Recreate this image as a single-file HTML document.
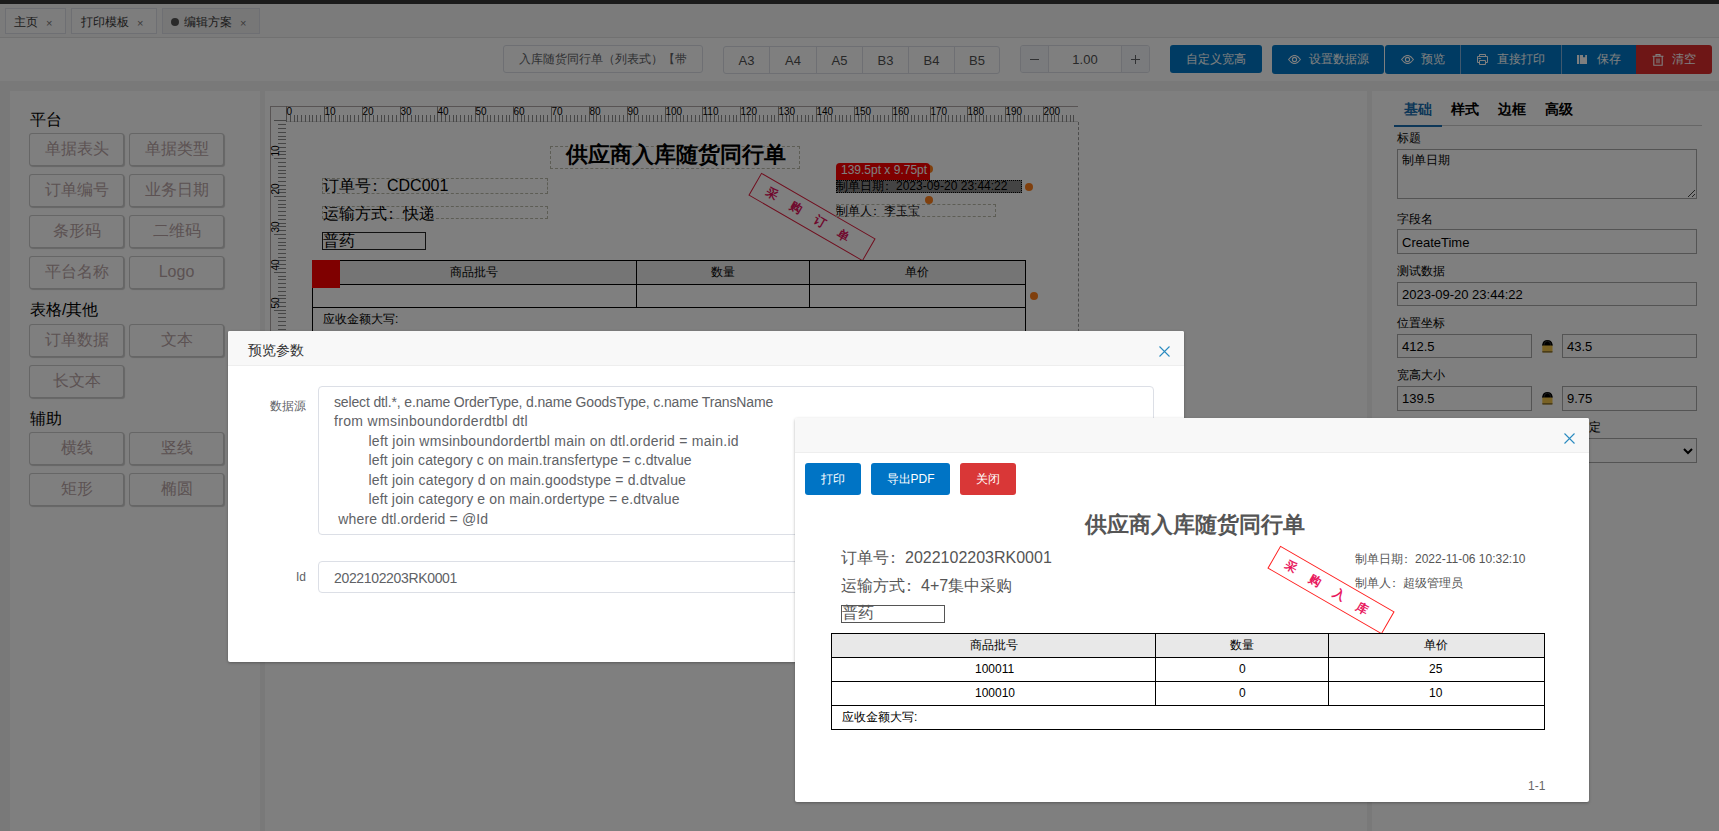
<!DOCTYPE html>
<html><head><meta charset="utf-8">
<style>
*{box-sizing:border-box;margin:0;padding:0}
html,body{width:1719px;height:831px;overflow:hidden;background:#f3f3f3;font-family:"Liberation Sans",sans-serif;color:#333;position:relative}
.a{position:absolute}
.t{position:absolute;white-space:nowrap;line-height:1}
#topbar{left:0;top:0;width:1719px;height:4px;background:#373737}
#tabbar{left:0;top:4px;width:1719px;height:34px;background:#f7f7f7;border-bottom:1px solid #e2e2e2}
.tab{position:absolute;top:4px;height:26px;border:1px solid #dcdfe6;background:#fafafa}
.tab.act{background:#efefef}
.tab .tx{position:absolute;top:7px;font-size:12px;line-height:12px;color:#383838}
.tab .cl{position:absolute;top:8.5px;font-size:11px;line-height:11px;color:#777}
#toolbar{left:0;top:38px;width:1719px;height:43px;background:#fff}
.grp{position:absolute;border:1px solid #dcdfe6;border-radius:3px;background:#fff}
.pbtn{position:absolute;top:0;height:100%;border-left:1px solid #dcdfe6;text-align:center;font-size:13px;color:#505050}
.bbtn{position:absolute;background:#0077c6;color:#fff;font-size:12px;text-align:center}
.panel{position:absolute;background:#fff}
.lbtn{position:absolute;width:95px;height:33px;border:1px solid rgba(0,0,0,0.2);border-radius:3px;box-shadow:1px 1px 1px rgba(0,0,0,0.2);background:#fff;color:#b9a5a6;font-size:16px;text-align:center;line-height:30px}
.lh{position:absolute;font-size:16px;line-height:16px;color:#000}
.dash{position:absolute;border:1px dashed #bba}
.ptxt{position:absolute;white-space:nowrap;color:#000}
.cc{position:relative;left:-0.22em}
#overlay{left:0;top:0;width:1719px;height:831px;background:rgba(0,0,0,0.5)}
.modal{position:absolute;background:#fff;border-radius:2px;box-shadow:0 1px 3px rgba(0,0,0,0.3)}
.mhead{position:absolute;left:0;top:0;width:100%;background:#f8f8f8;border-bottom:1px solid #eee;border-radius:2px 2px 0 0}
.rlabel{position:absolute;font-size:12px;line-height:12px;color:#000}
.rinput{position:absolute;border:1px solid #a9a9a9;background:#fff;font-size:13px;color:#000}
</style></head><body>
<div id="topbar" class="a"></div>
<div id="tabbar" class="a">
  <div class="tab" style="left:5px;width:61px"><span class="tx" style="left:8px">主页</span><span class="cl" style="left:40px">×</span></div>
  <div class="tab" style="left:71px;width:86px"><span class="tx" style="left:9px">打印模板</span><span class="cl" style="left:65px">×</span></div>
  <div class="tab act" style="left:162px;width:98px"><span class="a" style="left:8px;top:8.5px;width:8px;height:8px;border-radius:50%;background:#555"></span><span class="tx" style="left:21px">编辑方案</span><span class="cl" style="left:77px">×</span></div>
</div>
<div id="toolbar" class="a">
  <div class="grp" style="left:503px;top:7px;width:200px;height:28px"><span class="t" style="left:15px;top:7px;font-size:12px;color:#606266">入库随货同行单（列表式）【带</span></div>
  <div class="grp" style="left:723px;top:8px;width:277px;height:28px">
    <span class="pbtn" style="left:0;width:45px;border-left:none;line-height:27px">A3</span>
    <span class="pbtn" style="left:45px;width:47px;line-height:27px">A4</span>
    <span class="pbtn" style="left:92px;width:46px;line-height:27px">A5</span>
    <span class="pbtn" style="left:138px;width:46px;line-height:27px">B3</span>
    <span class="pbtn" style="left:184px;width:46px;line-height:27px">B4</span>
    <span class="pbtn" style="left:230px;width:45px;line-height:27px">B5</span>
  </div>
  <div class="grp" style="left:1020px;top:7px;width:130px;height:28px;overflow:hidden">
    <span class="pbtn" style="left:0;width:27px;border-left:none;background:#f5f7fa"><svg class="a" style="left:9px;top:13px" width="9" height="1"><rect width="9" height="1" fill="#606266"/></svg></span>
    <span class="pbtn" style="left:27px;width:73px;line-height:28px">1.00</span>
    <span class="pbtn" style="left:100px;width:28px;background:#f5f7fa"><svg class="a" style="left:9px;top:9px" width="9" height="9"><rect y="4" width="9" height="1" fill="#606266"/><rect x="4" width="1" height="9" fill="#606266"/></svg></span>
  </div>
  <div class="bbtn" style="left:1170px;top:7px;width:92px;height:28px;border-radius:3px;line-height:28px">自定义宽高</div>
<div class="bbtn" style="left:1272px;top:7px;width:112px;height:29px;border-radius:3px">
  <svg class="a" style="left:16px;top:10px" width="13" height="9" viewBox="0 0 13 9"><path d="M0.6 4.5 Q6.5 -3.6 12.4 4.5 Q6.5 12.6 0.6 4.5 Z" fill="none" stroke="#fff" stroke-width="1.1"/><circle cx="6.5" cy="4.5" r="2.1" fill="none" stroke="#fff" stroke-width="1.1"/></svg>
  <span class="t" style="left:37px;top:8px;font-size:12px">设置数据源</span>
</div>
<div class="bbtn" style="left:1385px;top:7px;width:75px;height:29px;border-radius:3px 0 0 3px">
  <svg class="a" style="left:16px;top:10px" width="13" height="9" viewBox="0 0 13 9"><path d="M0.6 4.5 Q6.5 -3.6 12.4 4.5 Q6.5 12.6 0.6 4.5 Z" fill="none" stroke="#fff" stroke-width="1.1"/><circle cx="6.5" cy="4.5" r="2.1" fill="none" stroke="#fff" stroke-width="1.1"/></svg>
  <span class="t" style="left:36px;top:8px;font-size:12px">预览</span>
</div>
<div class="bbtn" style="left:1460px;top:7px;width:101px;height:29px;border-left:1px solid #7fb0dc">
  <svg class="a" style="left:16px;top:9px" width="11" height="11" viewBox="0 0 11 11"><path d="M2.5 2.5 V0.5 H8.5 V2.5 M2.5 8.5 H0.5 V2.5 H10.5 V8.5 H8.5 M2.5 6.5 H8.5 V10.5 H2.5 Z M1.5 4.5 H3.8" fill="none" stroke="#fff" stroke-width="1"/></svg>
  <span class="t" style="left:36px;top:8px;font-size:12px">直接打印</span>
</div>
<div class="bbtn" style="left:1561px;top:7px;width:75px;height:29px;border-left:1px solid #7fb0dc">
  <svg class="a" style="left:15px;top:10px" width="10" height="9" viewBox="0 0 10 9"><path d="M0 0 H2 V9 H0 Z M2.8 0 H6 V2.3 H8.2 V0 H10 V9 H2.8 Z" fill="#fff"/></svg>
  <span class="t" style="left:35px;top:8px;font-size:12px">保存</span>
</div>
<div class="bbtn" style="left:1636px;top:7px;width:76px;height:29px;border-radius:0 3px 3px 0;background:#dc2c2c">
  <svg class="a" style="left:16px;top:9px" width="12" height="12" viewBox="0 0 12 12"><path d="M4 2.2 V0.6 H8 V2.2 M0.5 2.3 H11.5 M1.8 2.3 V11.3 H10.2 V2.3 M5 4.5 V9.2 M7 4.5 V9.2" fill="none" stroke="#fff" stroke-width="1.1"/></svg>
  <span class="t" style="left:36px;top:8px;font-size:12px">清空</span>
</div>

</div>
<div class="panel" style="left:10px;top:91px;width:250px;height:740px">
  <span class="lh" style="left:20px;top:21px">平台</span>
<div class="lbtn" style="left:19px;top:42px">单据表头</div>
<div class="lbtn" style="left:119px;top:42px">单据类型</div>
<div class="lbtn" style="left:19px;top:83px">订单编号</div>
<div class="lbtn" style="left:119px;top:83px">业务日期</div>
<div class="lbtn" style="left:19px;top:124px">条形码</div>
<div class="lbtn" style="left:119px;top:124px">二维码</div>
<div class="lbtn" style="left:19px;top:165px">平台名称</div>
<div class="lbtn" style="left:119px;top:165px">Logo</div>
<span class="lh" style="left:20px;top:211px">表格/其他</span>
<div class="lbtn" style="left:19px;top:233px">订单数据</div>
<div class="lbtn" style="left:119px;top:233px">文本</div>
<div class="lbtn" style="left:19px;top:274px">长文本</div>
<span class="lh" style="left:20px;top:320px">辅助</span>
<div class="lbtn" style="left:19px;top:341px">横线</div>
<div class="lbtn" style="left:119px;top:341px">竖线</div>
<div class="lbtn" style="left:19px;top:382px">矩形</div>
<div class="lbtn" style="left:119px;top:382px">椭圆</div>

</div>
<div class="panel" style="left:265px;top:91px;width:1102px;height:740px;overflow:hidden">
  <div class="a" style="left:5px;top:15px;width:809px;height:240px"><svg width="808" height="240" style="position:absolute;left:0;top:0" shape-rendering="crispEdges"><rect x="0" y="0" width="808" height="1" fill="#b0a8a8"/><rect x="0" y="0" width="1" height="240" fill="#b0a8a8"/><rect x="16" y="15" width="792" height="1" fill="#d8d8d8"/><rect x="16" y="0" width="1" height="16" fill="#909090"/><text x="16.5" y="9" font-size="10" fill="#000" font-family="Liberation Sans, sans-serif" shape-rendering="auto">0</text><rect x="20" y="9" width="1" height="7" fill="#8c8c8c"/><rect x="24" y="9" width="1" height="7" fill="#8c8c8c"/><rect x="27" y="9" width="1" height="7" fill="#8c8c8c"/><rect x="31" y="9" width="1" height="7" fill="#8c8c8c"/><rect x="35" y="9" width="1" height="7" fill="#8c8c8c"/><rect x="39" y="9" width="1" height="7" fill="#8c8c8c"/><rect x="42" y="9" width="1" height="7" fill="#8c8c8c"/><rect x="46" y="9" width="1" height="7" fill="#8c8c8c"/><rect x="50" y="9" width="1" height="7" fill="#8c8c8c"/><rect x="54" y="0" width="1" height="16" fill="#909090"/><text x="54.5" y="9" font-size="10" fill="#000" font-family="Liberation Sans, sans-serif" shape-rendering="auto">10</text><rect x="58" y="9" width="1" height="7" fill="#8c8c8c"/><rect x="61" y="9" width="1" height="7" fill="#8c8c8c"/><rect x="65" y="9" width="1" height="7" fill="#8c8c8c"/><rect x="69" y="9" width="1" height="7" fill="#8c8c8c"/><rect x="73" y="9" width="1" height="7" fill="#8c8c8c"/><rect x="77" y="9" width="1" height="7" fill="#8c8c8c"/><rect x="80" y="9" width="1" height="7" fill="#8c8c8c"/><rect x="84" y="9" width="1" height="7" fill="#8c8c8c"/><rect x="88" y="9" width="1" height="7" fill="#8c8c8c"/><rect x="92" y="0" width="1" height="16" fill="#909090"/><text x="92.5" y="9" font-size="10" fill="#000" font-family="Liberation Sans, sans-serif" shape-rendering="auto">20</text><rect x="95" y="9" width="1" height="7" fill="#8c8c8c"/><rect x="99" y="9" width="1" height="7" fill="#8c8c8c"/><rect x="103" y="9" width="1" height="7" fill="#8c8c8c"/><rect x="107" y="9" width="1" height="7" fill="#8c8c8c"/><rect x="111" y="9" width="1" height="7" fill="#8c8c8c"/><rect x="114" y="9" width="1" height="7" fill="#8c8c8c"/><rect x="118" y="9" width="1" height="7" fill="#8c8c8c"/><rect x="122" y="9" width="1" height="7" fill="#8c8c8c"/><rect x="126" y="9" width="1" height="7" fill="#8c8c8c"/><rect x="130" y="0" width="1" height="16" fill="#909090"/><text x="130.5" y="9" font-size="10" fill="#000" font-family="Liberation Sans, sans-serif" shape-rendering="auto">30</text><rect x="133" y="9" width="1" height="7" fill="#8c8c8c"/><rect x="137" y="9" width="1" height="7" fill="#8c8c8c"/><rect x="141" y="9" width="1" height="7" fill="#8c8c8c"/><rect x="145" y="9" width="1" height="7" fill="#8c8c8c"/><rect x="148" y="9" width="1" height="7" fill="#8c8c8c"/><rect x="152" y="9" width="1" height="7" fill="#8c8c8c"/><rect x="156" y="9" width="1" height="7" fill="#8c8c8c"/><rect x="160" y="9" width="1" height="7" fill="#8c8c8c"/><rect x="164" y="9" width="1" height="7" fill="#8c8c8c"/><rect x="167" y="0" width="1" height="16" fill="#909090"/><text x="167.5" y="9" font-size="10" fill="#000" font-family="Liberation Sans, sans-serif" shape-rendering="auto">40</text><rect x="171" y="9" width="1" height="7" fill="#8c8c8c"/><rect x="175" y="9" width="1" height="7" fill="#8c8c8c"/><rect x="179" y="9" width="1" height="7" fill="#8c8c8c"/><rect x="183" y="9" width="1" height="7" fill="#8c8c8c"/><rect x="186" y="9" width="1" height="7" fill="#8c8c8c"/><rect x="190" y="9" width="1" height="7" fill="#8c8c8c"/><rect x="194" y="9" width="1" height="7" fill="#8c8c8c"/><rect x="198" y="9" width="1" height="7" fill="#8c8c8c"/><rect x="201" y="9" width="1" height="7" fill="#8c8c8c"/><rect x="205" y="0" width="1" height="16" fill="#909090"/><text x="205.5" y="9" font-size="10" fill="#000" font-family="Liberation Sans, sans-serif" shape-rendering="auto">50</text><rect x="209" y="9" width="1" height="7" fill="#8c8c8c"/><rect x="213" y="9" width="1" height="7" fill="#8c8c8c"/><rect x="217" y="9" width="1" height="7" fill="#8c8c8c"/><rect x="220" y="9" width="1" height="7" fill="#8c8c8c"/><rect x="224" y="9" width="1" height="7" fill="#8c8c8c"/><rect x="228" y="9" width="1" height="7" fill="#8c8c8c"/><rect x="232" y="9" width="1" height="7" fill="#8c8c8c"/><rect x="236" y="9" width="1" height="7" fill="#8c8c8c"/><rect x="239" y="9" width="1" height="7" fill="#8c8c8c"/><rect x="243" y="0" width="1" height="16" fill="#909090"/><text x="243.5" y="9" font-size="10" fill="#000" font-family="Liberation Sans, sans-serif" shape-rendering="auto">60</text><rect x="247" y="9" width="1" height="7" fill="#8c8c8c"/><rect x="251" y="9" width="1" height="7" fill="#8c8c8c"/><rect x="254" y="9" width="1" height="7" fill="#8c8c8c"/><rect x="258" y="9" width="1" height="7" fill="#8c8c8c"/><rect x="262" y="9" width="1" height="7" fill="#8c8c8c"/><rect x="266" y="9" width="1" height="7" fill="#8c8c8c"/><rect x="270" y="9" width="1" height="7" fill="#8c8c8c"/><rect x="273" y="9" width="1" height="7" fill="#8c8c8c"/><rect x="277" y="9" width="1" height="7" fill="#8c8c8c"/><rect x="281" y="0" width="1" height="16" fill="#909090"/><text x="281.5" y="9" font-size="10" fill="#000" font-family="Liberation Sans, sans-serif" shape-rendering="auto">70</text><rect x="285" y="9" width="1" height="7" fill="#8c8c8c"/><rect x="289" y="9" width="1" height="7" fill="#8c8c8c"/><rect x="292" y="9" width="1" height="7" fill="#8c8c8c"/><rect x="296" y="9" width="1" height="7" fill="#8c8c8c"/><rect x="300" y="9" width="1" height="7" fill="#8c8c8c"/><rect x="304" y="9" width="1" height="7" fill="#8c8c8c"/><rect x="307" y="9" width="1" height="7" fill="#8c8c8c"/><rect x="311" y="9" width="1" height="7" fill="#8c8c8c"/><rect x="315" y="9" width="1" height="7" fill="#8c8c8c"/><rect x="319" y="0" width="1" height="16" fill="#909090"/><text x="319.5" y="9" font-size="10" fill="#000" font-family="Liberation Sans, sans-serif" shape-rendering="auto">80</text><rect x="323" y="9" width="1" height="7" fill="#8c8c8c"/><rect x="326" y="9" width="1" height="7" fill="#8c8c8c"/><rect x="330" y="9" width="1" height="7" fill="#8c8c8c"/><rect x="334" y="9" width="1" height="7" fill="#8c8c8c"/><rect x="338" y="9" width="1" height="7" fill="#8c8c8c"/><rect x="342" y="9" width="1" height="7" fill="#8c8c8c"/><rect x="345" y="9" width="1" height="7" fill="#8c8c8c"/><rect x="349" y="9" width="1" height="7" fill="#8c8c8c"/><rect x="353" y="9" width="1" height="7" fill="#8c8c8c"/><rect x="357" y="0" width="1" height="16" fill="#909090"/><text x="357.5" y="9" font-size="10" fill="#000" font-family="Liberation Sans, sans-serif" shape-rendering="auto">90</text><rect x="360" y="9" width="1" height="7" fill="#8c8c8c"/><rect x="364" y="9" width="1" height="7" fill="#8c8c8c"/><rect x="368" y="9" width="1" height="7" fill="#8c8c8c"/><rect x="372" y="9" width="1" height="7" fill="#8c8c8c"/><rect x="376" y="9" width="1" height="7" fill="#8c8c8c"/><rect x="379" y="9" width="1" height="7" fill="#8c8c8c"/><rect x="383" y="9" width="1" height="7" fill="#8c8c8c"/><rect x="387" y="9" width="1" height="7" fill="#8c8c8c"/><rect x="391" y="9" width="1" height="7" fill="#8c8c8c"/><rect x="395" y="0" width="1" height="16" fill="#909090"/><text x="395.5" y="9" font-size="10" fill="#000" font-family="Liberation Sans, sans-serif" shape-rendering="auto">100</text><rect x="398" y="9" width="1" height="7" fill="#8c8c8c"/><rect x="402" y="9" width="1" height="7" fill="#8c8c8c"/><rect x="406" y="9" width="1" height="7" fill="#8c8c8c"/><rect x="410" y="9" width="1" height="7" fill="#8c8c8c"/><rect x="413" y="9" width="1" height="7" fill="#8c8c8c"/><rect x="417" y="9" width="1" height="7" fill="#8c8c8c"/><rect x="421" y="9" width="1" height="7" fill="#8c8c8c"/><rect x="425" y="9" width="1" height="7" fill="#8c8c8c"/><rect x="429" y="9" width="1" height="7" fill="#8c8c8c"/><rect x="432" y="0" width="1" height="16" fill="#909090"/><text x="432.5" y="9" font-size="10" fill="#000" font-family="Liberation Sans, sans-serif" shape-rendering="auto">110</text><rect x="436" y="9" width="1" height="7" fill="#8c8c8c"/><rect x="440" y="9" width="1" height="7" fill="#8c8c8c"/><rect x="444" y="9" width="1" height="7" fill="#8c8c8c"/><rect x="448" y="9" width="1" height="7" fill="#8c8c8c"/><rect x="451" y="9" width="1" height="7" fill="#8c8c8c"/><rect x="455" y="9" width="1" height="7" fill="#8c8c8c"/><rect x="459" y="9" width="1" height="7" fill="#8c8c8c"/><rect x="463" y="9" width="1" height="7" fill="#8c8c8c"/><rect x="466" y="9" width="1" height="7" fill="#8c8c8c"/><rect x="470" y="0" width="1" height="16" fill="#909090"/><text x="470.5" y="9" font-size="10" fill="#000" font-family="Liberation Sans, sans-serif" shape-rendering="auto">120</text><rect x="474" y="9" width="1" height="7" fill="#8c8c8c"/><rect x="478" y="9" width="1" height="7" fill="#8c8c8c"/><rect x="482" y="9" width="1" height="7" fill="#8c8c8c"/><rect x="485" y="9" width="1" height="7" fill="#8c8c8c"/><rect x="489" y="9" width="1" height="7" fill="#8c8c8c"/><rect x="493" y="9" width="1" height="7" fill="#8c8c8c"/><rect x="497" y="9" width="1" height="7" fill="#8c8c8c"/><rect x="501" y="9" width="1" height="7" fill="#8c8c8c"/><rect x="504" y="9" width="1" height="7" fill="#8c8c8c"/><rect x="508" y="0" width="1" height="16" fill="#909090"/><text x="508.5" y="9" font-size="10" fill="#000" font-family="Liberation Sans, sans-serif" shape-rendering="auto">130</text><rect x="512" y="9" width="1" height="7" fill="#8c8c8c"/><rect x="516" y="9" width="1" height="7" fill="#8c8c8c"/><rect x="519" y="9" width="1" height="7" fill="#8c8c8c"/><rect x="523" y="9" width="1" height="7" fill="#8c8c8c"/><rect x="527" y="9" width="1" height="7" fill="#8c8c8c"/><rect x="531" y="9" width="1" height="7" fill="#8c8c8c"/><rect x="535" y="9" width="1" height="7" fill="#8c8c8c"/><rect x="538" y="9" width="1" height="7" fill="#8c8c8c"/><rect x="542" y="9" width="1" height="7" fill="#8c8c8c"/><rect x="546" y="0" width="1" height="16" fill="#909090"/><text x="546.5" y="9" font-size="10" fill="#000" font-family="Liberation Sans, sans-serif" shape-rendering="auto">140</text><rect x="550" y="9" width="1" height="7" fill="#8c8c8c"/><rect x="554" y="9" width="1" height="7" fill="#8c8c8c"/><rect x="557" y="9" width="1" height="7" fill="#8c8c8c"/><rect x="561" y="9" width="1" height="7" fill="#8c8c8c"/><rect x="565" y="9" width="1" height="7" fill="#8c8c8c"/><rect x="569" y="9" width="1" height="7" fill="#8c8c8c"/><rect x="572" y="9" width="1" height="7" fill="#8c8c8c"/><rect x="576" y="9" width="1" height="7" fill="#8c8c8c"/><rect x="580" y="9" width="1" height="7" fill="#8c8c8c"/><rect x="584" y="0" width="1" height="16" fill="#909090"/><text x="584.5" y="9" font-size="10" fill="#000" font-family="Liberation Sans, sans-serif" shape-rendering="auto">150</text><rect x="588" y="9" width="1" height="7" fill="#8c8c8c"/><rect x="591" y="9" width="1" height="7" fill="#8c8c8c"/><rect x="595" y="9" width="1" height="7" fill="#8c8c8c"/><rect x="599" y="9" width="1" height="7" fill="#8c8c8c"/><rect x="603" y="9" width="1" height="7" fill="#8c8c8c"/><rect x="607" y="9" width="1" height="7" fill="#8c8c8c"/><rect x="610" y="9" width="1" height="7" fill="#8c8c8c"/><rect x="614" y="9" width="1" height="7" fill="#8c8c8c"/><rect x="618" y="9" width="1" height="7" fill="#8c8c8c"/><rect x="622" y="0" width="1" height="16" fill="#909090"/><text x="622.5" y="9" font-size="10" fill="#000" font-family="Liberation Sans, sans-serif" shape-rendering="auto">160</text><rect x="625" y="9" width="1" height="7" fill="#8c8c8c"/><rect x="629" y="9" width="1" height="7" fill="#8c8c8c"/><rect x="633" y="9" width="1" height="7" fill="#8c8c8c"/><rect x="637" y="9" width="1" height="7" fill="#8c8c8c"/><rect x="641" y="9" width="1" height="7" fill="#8c8c8c"/><rect x="644" y="9" width="1" height="7" fill="#8c8c8c"/><rect x="648" y="9" width="1" height="7" fill="#8c8c8c"/><rect x="652" y="9" width="1" height="7" fill="#8c8c8c"/><rect x="656" y="9" width="1" height="7" fill="#8c8c8c"/><rect x="660" y="0" width="1" height="16" fill="#909090"/><text x="660.5" y="9" font-size="10" fill="#000" font-family="Liberation Sans, sans-serif" shape-rendering="auto">170</text><rect x="663" y="9" width="1" height="7" fill="#8c8c8c"/><rect x="667" y="9" width="1" height="7" fill="#8c8c8c"/><rect x="671" y="9" width="1" height="7" fill="#8c8c8c"/><rect x="675" y="9" width="1" height="7" fill="#8c8c8c"/><rect x="678" y="9" width="1" height="7" fill="#8c8c8c"/><rect x="682" y="9" width="1" height="7" fill="#8c8c8c"/><rect x="686" y="9" width="1" height="7" fill="#8c8c8c"/><rect x="690" y="9" width="1" height="7" fill="#8c8c8c"/><rect x="694" y="9" width="1" height="7" fill="#8c8c8c"/><rect x="697" y="0" width="1" height="16" fill="#909090"/><text x="697.5" y="9" font-size="10" fill="#000" font-family="Liberation Sans, sans-serif" shape-rendering="auto">180</text><rect x="701" y="9" width="1" height="7" fill="#8c8c8c"/><rect x="705" y="9" width="1" height="7" fill="#8c8c8c"/><rect x="709" y="9" width="1" height="7" fill="#8c8c8c"/><rect x="713" y="9" width="1" height="7" fill="#8c8c8c"/><rect x="716" y="9" width="1" height="7" fill="#8c8c8c"/><rect x="720" y="9" width="1" height="7" fill="#8c8c8c"/><rect x="724" y="9" width="1" height="7" fill="#8c8c8c"/><rect x="728" y="9" width="1" height="7" fill="#8c8c8c"/><rect x="731" y="9" width="1" height="7" fill="#8c8c8c"/><rect x="735" y="0" width="1" height="16" fill="#909090"/><text x="735.5" y="9" font-size="10" fill="#000" font-family="Liberation Sans, sans-serif" shape-rendering="auto">190</text><rect x="739" y="9" width="1" height="7" fill="#8c8c8c"/><rect x="743" y="9" width="1" height="7" fill="#8c8c8c"/><rect x="747" y="9" width="1" height="7" fill="#8c8c8c"/><rect x="750" y="9" width="1" height="7" fill="#8c8c8c"/><rect x="754" y="9" width="1" height="7" fill="#8c8c8c"/><rect x="758" y="9" width="1" height="7" fill="#8c8c8c"/><rect x="762" y="9" width="1" height="7" fill="#8c8c8c"/><rect x="766" y="9" width="1" height="7" fill="#8c8c8c"/><rect x="769" y="9" width="1" height="7" fill="#8c8c8c"/><rect x="773" y="0" width="1" height="16" fill="#909090"/><text x="773.5" y="9" font-size="10" fill="#000" font-family="Liberation Sans, sans-serif" shape-rendering="auto">200</text><rect x="777" y="9" width="1" height="7" fill="#8c8c8c"/><rect x="781" y="9" width="1" height="7" fill="#8c8c8c"/><rect x="784" y="9" width="1" height="7" fill="#8c8c8c"/><rect x="788" y="9" width="1" height="7" fill="#8c8c8c"/><rect x="792" y="9" width="1" height="7" fill="#8c8c8c"/><rect x="796" y="9" width="1" height="7" fill="#8c8c8c"/><rect x="800" y="9" width="1" height="7" fill="#8c8c8c"/><rect x="803" y="9" width="1" height="7" fill="#8c8c8c"/><rect x="4" y="14" width="12" height="1" fill="#8c8c8c"/><rect x="8" y="18" width="8" height="1" fill="#8c8c8c"/><rect x="8" y="22" width="8" height="1" fill="#8c8c8c"/><rect x="8" y="26" width="8" height="1" fill="#8c8c8c"/><rect x="8" y="30" width="8" height="1" fill="#8c8c8c"/><rect x="8" y="33" width="8" height="1" fill="#8c8c8c"/><rect x="8" y="37" width="8" height="1" fill="#8c8c8c"/><rect x="8" y="41" width="8" height="1" fill="#8c8c8c"/><rect x="8" y="45" width="8" height="1" fill="#8c8c8c"/><rect x="8" y="48" width="8" height="1" fill="#8c8c8c"/><rect x="4" y="52" width="12" height="1" fill="#8c8c8c"/><text transform="translate(8.8,50.5) rotate(-90)" font-size="10" fill="#000" font-family="Liberation Sans, sans-serif">10</text><rect x="8" y="56" width="8" height="1" fill="#8c8c8c"/><rect x="8" y="60" width="8" height="1" fill="#8c8c8c"/><rect x="8" y="64" width="8" height="1" fill="#8c8c8c"/><rect x="8" y="67" width="8" height="1" fill="#8c8c8c"/><rect x="8" y="71" width="8" height="1" fill="#8c8c8c"/><rect x="8" y="75" width="8" height="1" fill="#8c8c8c"/><rect x="8" y="79" width="8" height="1" fill="#8c8c8c"/><rect x="8" y="83" width="8" height="1" fill="#8c8c8c"/><rect x="8" y="86" width="8" height="1" fill="#8c8c8c"/><rect x="4" y="90" width="12" height="1" fill="#8c8c8c"/><text transform="translate(8.8,88.5) rotate(-90)" font-size="10" fill="#000" font-family="Liberation Sans, sans-serif">20</text><rect x="8" y="94" width="8" height="1" fill="#8c8c8c"/><rect x="8" y="98" width="8" height="1" fill="#8c8c8c"/><rect x="8" y="101" width="8" height="1" fill="#8c8c8c"/><rect x="8" y="105" width="8" height="1" fill="#8c8c8c"/><rect x="8" y="109" width="8" height="1" fill="#8c8c8c"/><rect x="8" y="113" width="8" height="1" fill="#8c8c8c"/><rect x="8" y="117" width="8" height="1" fill="#8c8c8c"/><rect x="8" y="120" width="8" height="1" fill="#8c8c8c"/><rect x="8" y="124" width="8" height="1" fill="#8c8c8c"/><rect x="4" y="128" width="12" height="1" fill="#8c8c8c"/><text transform="translate(8.8,126.5) rotate(-90)" font-size="10" fill="#000" font-family="Liberation Sans, sans-serif">30</text><rect x="8" y="132" width="8" height="1" fill="#8c8c8c"/><rect x="8" y="136" width="8" height="1" fill="#8c8c8c"/><rect x="8" y="139" width="8" height="1" fill="#8c8c8c"/><rect x="8" y="143" width="8" height="1" fill="#8c8c8c"/><rect x="8" y="147" width="8" height="1" fill="#8c8c8c"/><rect x="8" y="151" width="8" height="1" fill="#8c8c8c"/><rect x="8" y="154" width="8" height="1" fill="#8c8c8c"/><rect x="8" y="158" width="8" height="1" fill="#8c8c8c"/><rect x="8" y="162" width="8" height="1" fill="#8c8c8c"/><rect x="4" y="166" width="12" height="1" fill="#8c8c8c"/><text transform="translate(8.8,164.5) rotate(-90)" font-size="10" fill="#000" font-family="Liberation Sans, sans-serif">40</text><rect x="8" y="170" width="8" height="1" fill="#8c8c8c"/><rect x="8" y="173" width="8" height="1" fill="#8c8c8c"/><rect x="8" y="177" width="8" height="1" fill="#8c8c8c"/><rect x="8" y="181" width="8" height="1" fill="#8c8c8c"/><rect x="8" y="185" width="8" height="1" fill="#8c8c8c"/><rect x="8" y="189" width="8" height="1" fill="#8c8c8c"/><rect x="8" y="192" width="8" height="1" fill="#8c8c8c"/><rect x="8" y="196" width="8" height="1" fill="#8c8c8c"/><rect x="8" y="200" width="8" height="1" fill="#8c8c8c"/><rect x="4" y="204" width="12" height="1" fill="#8c8c8c"/><text transform="translate(8.8,202.5) rotate(-90)" font-size="10" fill="#000" font-family="Liberation Sans, sans-serif">50</text><rect x="8" y="207" width="8" height="1" fill="#8c8c8c"/><rect x="8" y="211" width="8" height="1" fill="#8c8c8c"/><rect x="8" y="215" width="8" height="1" fill="#8c8c8c"/><rect x="8" y="219" width="8" height="1" fill="#8c8c8c"/><rect x="8" y="223" width="8" height="1" fill="#8c8c8c"/><rect x="8" y="226" width="8" height="1" fill="#8c8c8c"/><rect x="8" y="230" width="8" height="1" fill="#8c8c8c"/><rect x="8" y="234" width="8" height="1" fill="#8c8c8c"/><rect x="8" y="238" width="8" height="1" fill="#8c8c8c"/></svg></div>
<div class="a" style="left:813px;top:31px;width:0;height:225px;border-left:1px dashed #999"></div>
<!-- title -->
<div class="dash" style="left:285px;top:55px;width:250px;height:23px"></div>
<span class="ptxt" style="left:301px;top:52.5px;font-size:22px;line-height:22px;font-weight:bold">供应商入库随货同行单</span>
<div class="dash" style="left:57px;top:87px;width:226px;height:16px"></div>
<span class="ptxt" style="left:58px;top:87px;font-size:16px;line-height:16px">订单号<span class="cc">：</span>CDC001</span>
<div class="dash" style="left:57px;top:115px;width:226px;height:13px"></div>
<span class="ptxt" style="left:58px;top:115px;font-size:16px;line-height:16px">运输方式<span class="cc">：</span>快递</span>
<div class="a" style="left:57px;top:141px;width:104px;height:18px;border:1px solid #222"></div>
<span class="ptxt" style="left:58px;top:142px;font-size:16px;line-height:16px">普药</span>
<!-- stamp -->
<div class="a" style="left:481px;top:112.5px;width:132px;height:26px;border:1px solid #e02040;transform:rotate(30deg);color:#e0105a;font-size:12px;font-weight:bold;line-height:24px;white-space:nowrap;letter-spacing:15.5px;text-indent:13px">采购订单</div>
<!-- selected -->
<div class="a" style="left:571px;top:89px;width:186px;height:13px;background:#888;border:1px dotted #000"></div>
<span class="ptxt" style="left:571px;top:89px;font-size:12px;line-height:12px">制单日期<span class="cc">：</span>2023-09-20 23:44:22</span>
<div class="a" style="left:660px;top:74px;width:8px;height:8px;border-radius:50%;background:#ff7f1a"></div>
<div class="a" style="left:571px;top:72px;width:94px;height:17px;background:#ff0000;border-radius:4px 4px 0 0"></div>
<span class="ptxt" style="left:576px;top:73px;font-size:12px;line-height:12px;color:#fff">139.5pt x 9.75pt</span>
<div class="a" style="left:760px;top:92px;width:8px;height:8px;border-radius:50%;background:#ff7f1a"></div>
<div class="a" style="left:660px;top:105px;width:8px;height:8px;border-radius:50%;background:#ff7f1a"></div>
<div class="dash" style="left:571px;top:113px;width:160px;height:13px"></div>
<span class="ptxt" style="left:571px;top:114px;font-size:12px;line-height:12px">制单人<span class="cc">：</span>李玉宝</span>
<!-- table -->
<div class="a" style="left:47px;top:169px;width:714px;height:25px;background:#ebebeb;border-top:1.5px solid #000;border-bottom:1.5px solid #000"></div>
<div class="a" style="left:47px;top:193px;width:714px;height:24px;border-bottom:1.5px solid #000"></div>
<div class="a" style="left:47px;top:169px;width:714px;height:100px;border-left:1.5px solid #000;border-right:1.5px solid #000"></div>
<div class="a" style="left:371px;top:169px;width:0;height:48px;border-left:1.5px solid #000"></div>
<div class="a" style="left:544px;top:169px;width:0;height:48px;border-left:1.5px solid #000"></div>
<div class="a" style="left:47px;top:169px;width:28px;height:28px;background:#f00"></div>
<span class="ptxt" style="left:185px;top:175px;font-size:12px;line-height:12px">商品批号</span>
<span class="ptxt" style="left:446px;top:175px;font-size:12px;line-height:12px">数量</span>
<span class="ptxt" style="left:640px;top:175px;font-size:12px;line-height:12px">单价</span>
<span class="ptxt" style="left:58px;top:222px;font-size:12px;line-height:12px">应收金额大写:</span>
<div class="a" style="left:765px;top:201px;width:8px;height:8px;border-radius:50%;background:#ff7f1a"></div>

</div>
<div class="panel" style="left:1372px;top:91px;width:347px;height:740px">
  <span class="a" style="left:32px;top:11px;font-size:14px;line-height:14px;font-weight:bold;color:#1a6fb0">基础</span>
<span class="a" style="left:79px;top:11px;font-size:14px;line-height:14px;font-weight:bold;color:#000">样式</span>
<span class="a" style="left:126px;top:11px;font-size:14px;line-height:14px;font-weight:bold;color:#000">边框</span>
<span class="a" style="left:173px;top:11px;font-size:14px;line-height:14px;font-weight:bold;color:#000">高级</span>
<div class="a" style="left:22px;top:34px;width:308px;height:1px;background:#ccc"></div>
<div class="a" style="left:22px;top:34px;width:48px;height:2px;background:#1a6fb0"></div>
<span class="rlabel" style="left:25px;top:41px">标题</span>
<div class="rinput" style="left:25px;top:58px;width:300px;height:50px"><span class="t" style="left:4px;top:4px;font-size:12px">制单日期</span>
<svg class="a" style="right:0px;bottom:0px" width="10" height="10"><path d="M9 2 L2 9 M9 6 L6 9" stroke="#444" stroke-width="1"/></svg></div>
<span class="rlabel" style="left:25px;top:122px">字段名</span>
<div class="rinput" style="left:25px;top:138px;width:300px;height:25px"><span class="t" style="left:4px;top:6px">CreateTime</span></div>
<span class="rlabel" style="left:25px;top:174px">测试数据</span>
<div class="rinput" style="left:25px;top:191px;width:300px;height:24px"><span class="t" style="left:4px;top:5px">2023-09-20 23:44:22</span></div>
<span class="rlabel" style="left:25px;top:226px">位置坐标</span>
<div class="rinput" style="left:25px;top:243px;width:135px;height:24px"><span class="t" style="left:4px;top:5px">412.5</span></div>
<svg class="a" style="left:169.5px;top:248px" width="11" height="14" viewBox="0 0 11 14"><path d="M0.3 7 V5.2 A5.2 5.2 0 0 1 10.5 5.2 V7 Z" fill="#000"/><path d="M2.2 6.5 V5.4 A3.2 3.2 0 0 1 8.6 5.4 V6.5" fill="none" stroke="#555" stroke-width="0.6"/><rect x="0.3" y="6.6" width="10.2" height="6.8" rx="0.8" fill="#f2c54a"/><rect x="0.3" y="12.4" width="10.2" height="1" fill="#5a4a20"/></svg>
<div class="rinput" style="left:190px;top:243px;width:135px;height:24px"><span class="t" style="left:4px;top:5px">43.5</span></div>
<span class="rlabel" style="left:25px;top:278px">宽高大小</span>
<div class="rinput" style="left:25px;top:295px;width:135px;height:25px"><span class="t" style="left:4px;top:5px">139.5</span></div>
<svg class="a" style="left:169.5px;top:300px" width="11" height="14" viewBox="0 0 11 14"><path d="M0.3 7 V5.2 A5.2 5.2 0 0 1 10.5 5.2 V7 Z" fill="#000"/><path d="M2.2 6.5 V5.4 A3.2 3.2 0 0 1 8.6 5.4 V6.5" fill="none" stroke="#555" stroke-width="0.6"/><rect x="0.3" y="6.6" width="10.2" height="6.8" rx="0.8" fill="#f2c54a"/><rect x="0.3" y="12.4" width="10.2" height="1" fill="#5a4a20"/></svg>
<div class="rinput" style="left:190px;top:295px;width:135px;height:25px"><span class="t" style="left:4px;top:5px">9.75</span></div>
<span class="rlabel" style="left:181px;top:330px">位置固定</span>
<div class="rinput" style="left:25px;top:347px;width:300px;height:25px"><svg class="a" style="right:3px;top:9px" width="10" height="7"><path d="M1 1 L5 5 L9 1" fill="none" stroke="#000" stroke-width="2"/></svg></div>

</div>
<div id="overlay" class="a"></div>
<div class="modal" style="left:228px;top:331px;width:956px;height:331px">
  <div class="mhead" style="height:35px"></div>
  <span class="t" style="left:20px;top:12px;font-size:14px;line-height:14px;color:#333">预览参数</span>
  <svg class="a" style="left:931px;top:15px" width="11" height="11" viewBox="0 0 11 11"><path d="M0.5 0.5 L10.5 10.5 M10.5 0.5 L0.5 10.5" stroke="#2a8bc0" stroke-width="1.1"/></svg>
  <span class="t" style="left:42px;top:69px;font-size:12px;line-height:12px;color:#606266">数据源</span>
  <div class="a" style="left:90px;top:55px;width:836px;height:149px;border:1px solid #dcdfe6;border-radius:4px"></div>
  <span class="t" style="left:106px;top:64.15px;font-size:14px;line-height:14px;letter-spacing:-0.15px;color:#606266">select dtl.*, e.name OrderType, d.name GoodsType, c.name TransName</span>
  <span class="t" style="left:106px;top:83.35px;font-size:14px;line-height:14px;letter-spacing:0.34px;color:#606266">from wmsinboundorderdtbl dtl</span>
  <span class="t" style="left:140.5px;top:103.15px;font-size:14px;line-height:14px;letter-spacing:0.26px;color:#606266">left join wmsinboundordertbl main on dtl.orderid = main.id</span>
  <span class="t" style="left:140.5px;top:122.45px;font-size:14px;line-height:14px;letter-spacing:0.13px;color:#606266">left join category c on main.transfertype = c.dtvalue</span>
  <span class="t" style="left:140.5px;top:141.75px;font-size:14px;line-height:14px;letter-spacing:0.18px;color:#606266">left join category d on main.goodstype = d.dtvalue</span>
  <span class="t" style="left:140.5px;top:160.95px;font-size:14px;line-height:14px;letter-spacing:0.16px;color:#606266">left join category e on main.ordertype = e.dtvalue</span>
  <span class="t" style="left:110.3px;top:180.65px;font-size:14px;line-height:14px;letter-spacing:0.17px;color:#606266">where dtl.orderid = @Id</span>
  <span class="t" style="left:68px;top:240px;font-size:12px;line-height:12px;color:#606266">Id</span>
  <div class="a" style="left:90px;top:230px;width:836px;height:32px;border:1px solid #dcdfe6;border-radius:4px"></div>
  <span class="t" style="left:106px;top:240px;font-size:14px;line-height:14px;letter-spacing:-0.34px;color:#606266">2022102203RK0001</span>
</div>

<div class="modal" style="left:795px;top:418px;width:794px;height:384px">
  <div class="mhead" style="height:35px"></div>
  <svg class="a" style="left:769px;top:15px" width="11" height="11" viewBox="0 0 11 11"><path d="M0.5 0.5 L10.5 10.5 M10.5 0.5 L0.5 10.5" stroke="#2a8bc0" stroke-width="1.1"/></svg>
  <div class="a" style="left:10px;top:45px;width:56px;height:32px;background:#0074c5;border-radius:3px;color:#fff;font-size:12px;line-height:32px;text-align:center">打印</div>
  <div class="a" style="left:76px;top:45px;width:79px;height:32px;background:#0074c5;border-radius:3px;color:#fff;font-size:12px;line-height:32px;text-align:center">导出PDF</div>
  <div class="a" style="left:165px;top:45px;width:56px;height:32px;background:#d93737;border-radius:3px;color:#fff;font-size:12px;line-height:32px;text-align:center">关闭</div>
  <span class="ptxt" style="left:290px;top:96px;font-size:22px;line-height:22px;font-weight:bold;color:#555">供应商入库随货同行单</span>
  <span class="ptxt" style="left:46px;top:132px;font-size:16px;line-height:16px;color:#555">订单号<span class="cc">：</span>2022102203RK0001</span>
  <span class="ptxt" style="left:46px;top:160px;font-size:16px;line-height:16px;color:#555">运输方式<span class="cc">：</span>4+7集中采购</span>
  <div class="a" style="left:46px;top:187px;width:104px;height:18px;border:1px solid #555"></div>
  <span class="ptxt" style="left:47px;top:187px;font-size:16px;line-height:16px;color:#555">普药</span>
  <div class="a" style="left:470px;top:158.5px;width:132px;height:26px;border:1px solid #ff2020;transform:rotate(30deg);color:#e8175d;font-size:12px;font-weight:bold;line-height:24px;white-space:nowrap;letter-spacing:15.5px;text-indent:13px">采购入库</div>
  <span class="ptxt" style="left:560px;top:135px;font-size:12px;line-height:12px;color:#555">制单日期<span class="cc">：</span>2022-11-06 10:32:10</span>
  <span class="ptxt" style="left:560px;top:159px;font-size:12px;line-height:12px;color:#555">制单人<span class="cc">：</span>超级管理员</span>
  <div class="a" style="left:36px;top:215px;width:714px;height:97px;border:1.5px solid #000"></div>
  <div class="a" style="left:37px;top:216px;width:712px;height:24px;background:#e8e8e8;border-bottom:1.5px solid #000"></div>
  <div class="a" style="left:36px;top:263px;width:714px;height:0;border-top:1.5px solid #000"></div>
  <div class="a" style="left:36px;top:287px;width:714px;height:0;border-top:1.5px solid #000"></div>
  <div class="a" style="left:360px;top:215px;width:0;height:72px;border-left:1.5px solid #000"></div>
  <div class="a" style="left:533px;top:215px;width:0;height:72px;border-left:1.5px solid #000"></div>
  <span class="ptxt" style="left:175px;top:221px;font-size:12px;line-height:12px">商品批号</span>
  <span class="ptxt" style="left:435px;top:221px;font-size:12px;line-height:12px">数量</span>
  <span class="ptxt" style="left:629px;top:221px;font-size:12px;line-height:12px">单价</span>
  <span class="ptxt" style="left:180px;top:245px;font-size:12px;line-height:12px">100011</span>
  <span class="ptxt" style="left:444px;top:245px;font-size:12px;line-height:12px">0</span>
  <span class="ptxt" style="left:634px;top:245px;font-size:12px;line-height:12px">25</span>
  <span class="ptxt" style="left:180px;top:269px;font-size:12px;line-height:12px">100010</span>
  <span class="ptxt" style="left:444px;top:269px;font-size:12px;line-height:12px">0</span>
  <span class="ptxt" style="left:634px;top:269px;font-size:12px;line-height:12px">10</span>
  <span class="ptxt" style="left:47px;top:293px;font-size:12px;line-height:12px">应收金额大写:</span>
  <span class="ptxt" style="left:733px;top:362px;font-size:12px;line-height:12px;color:#666">1-1</span>
</div>

</body></html>
